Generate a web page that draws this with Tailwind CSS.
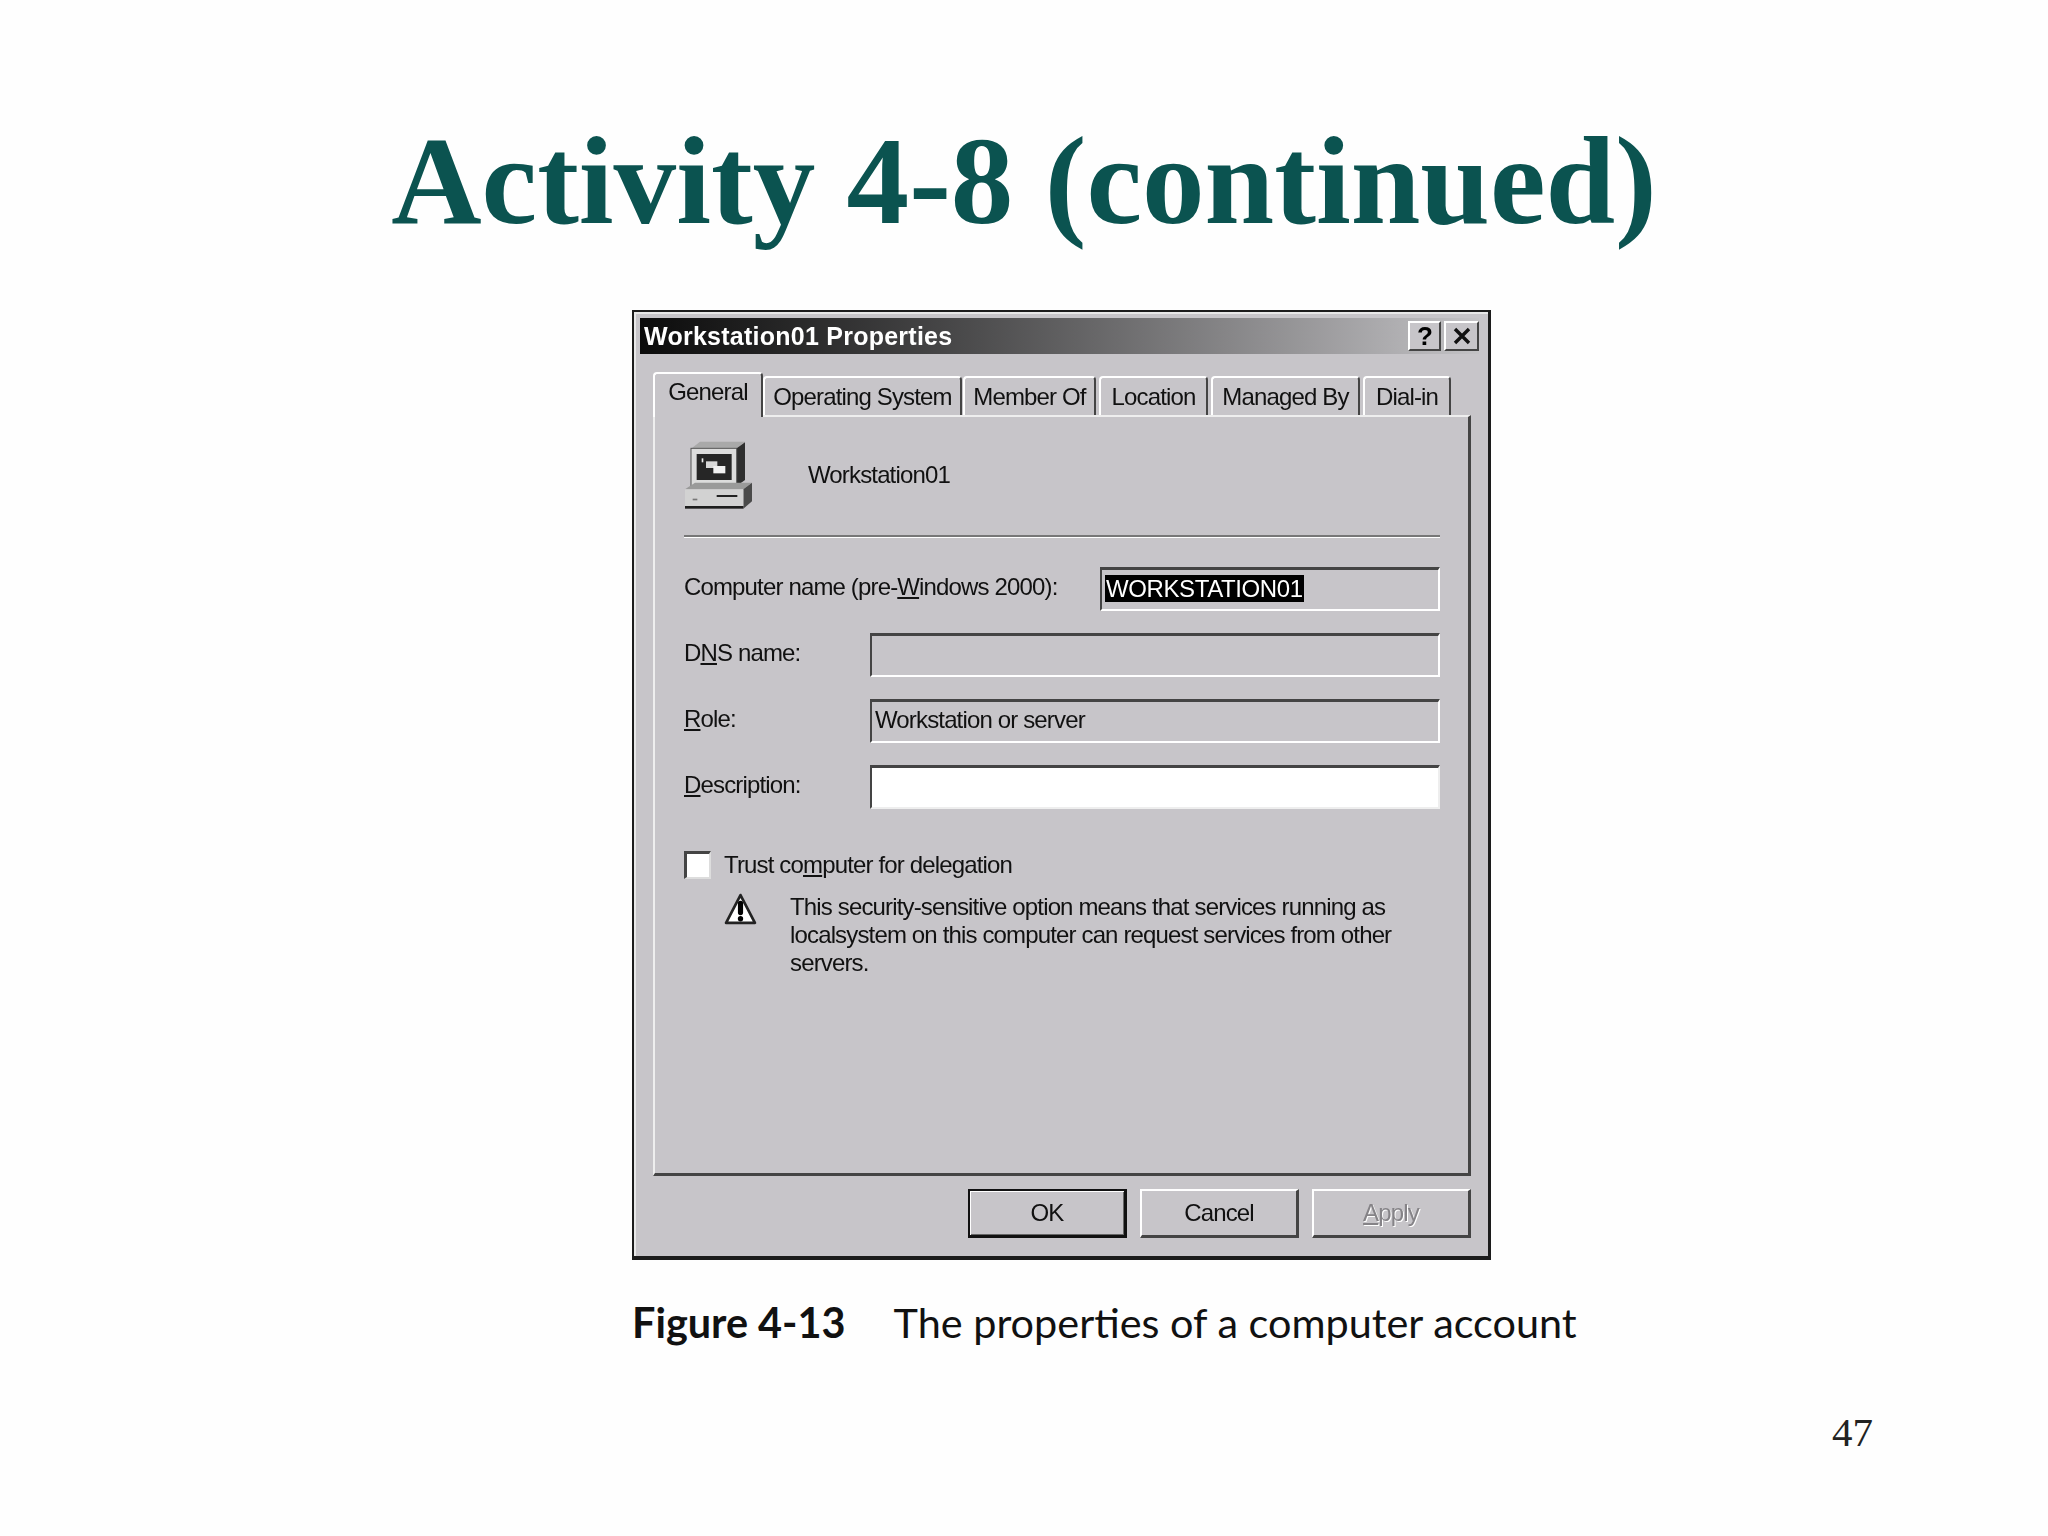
<!DOCTYPE html>
<html lang="en">
<head>
  <meta charset="UTF-8">
  <title>Activity 4-8 (continued)</title>
  <script src="https://cdn.jsdelivr.net/npm/@tailwindcss/browser@4"></script>
</head>
<body class="bg-white">
<div class="w-[2048px] h-[1536px] overflow-hidden bg-[#fefefe] flex flex-col">

  <!-- Slide title -->
  <h1 class="pt-[118px] text-center font-['Liberation_Serif',serif] font-bold text-[125.2px] leading-[125px] text-[#0b5350]">Activity 4-8 (continued)</h1>

  <!-- Properties dialog -->
  <div class="mt-[67px] ml-[632px] w-[859px] h-[950px] flex flex-col bg-[#c7c5c9] border-t-2 border-l-2 border-r-[3px] border-b-[4px] border-[#1c1c1c] pt-[6px] pl-[6px] pr-[9px] font-['Liberation_Sans',sans-serif] text-[24px] leading-[28px] tracking-[-0.85px] text-[#111] blur-[0.7px] shadow-[inset_2px_2px_0_#e8e8e8]">

    <!-- Title bar -->
    <div class="h-[36px] flex items-center justify-between bg-gradient-to-r from-[#0c0c0c] to-[#c4c3c6] pl-[4px] pr-0">
      <span class="font-bold text-white text-[25px] tracking-[0.25px]">Workstation01 Properties</span>
      <div class="flex gap-[3px]">
        <div class="w-[33px] h-[30px] flex items-center justify-center bg-[#c7c5c9] border-t-2 border-l-2 border-white border-r-2 border-b-2 border-r-[#444] border-b-[#444] font-bold text-[26px] text-black">?</div>
        <div class="w-[35px] h-[30px] flex items-center justify-center bg-[#c7c5c9] border-t-2 border-l-2 border-white border-r-2 border-b-2 border-r-[#444] border-b-[#444]">
          <svg width="20" height="18" viewBox="0 0 20 18"><path d="M3 2 L17 16 M17 2 L3 16" stroke="#111" stroke-width="3.4" fill="none"/></svg>
        </div>
      </div>
    </div>

    <!-- Tabs -->
    <div class="mt-[18px] ml-[13px] h-[45px] flex items-end relative z-10">
      <div class="w-[110px] h-[45px] pb-[8px] flex items-center justify-center bg-[#c7c5c9] border-t-2 border-l-2 border-white border-r-2 border-r-[#444] rounded-t-[4px]">General</div>
      <div class="w-[199px] h-[39px] mb-[2px] flex items-center justify-center border-t-2 border-l-2 border-white border-r-2 border-r-[#444] rounded-t-[4px]">Operating System</div>
      <div class="ml-[1px] w-[133px] h-[39px] mb-[2px] flex items-center justify-center border-t-2 border-l-2 border-white border-r-2 border-r-[#444] rounded-t-[4px]">Member Of</div>
      <div class="ml-[3px] w-[109px] h-[39px] mb-[2px] flex items-center justify-center border-t-2 border-l-2 border-white border-r-2 border-r-[#444] rounded-t-[4px]">Location</div>
      <div class="ml-[3px] w-[149px] h-[39px] mb-[2px] flex items-center justify-center border-t-2 border-l-2 border-white border-r-2 border-r-[#444] rounded-t-[4px]">Managed By</div>
      <div class="ml-[3px] w-[88px] h-[39px] mb-[2px] flex items-center justify-center border-t-2 border-l-2 border-white border-r-2 border-r-[#444] rounded-t-[4px]">Dial-in</div>
    </div>

    <!-- Tab panel -->
    <div class="-mt-[2px] ml-[13px] mr-[8px] h-[761px] flex flex-col border-t-2 border-l-2 border-[#eee] border-r-[3px] border-b-[3px] border-r-[#444] border-b-[#444] pl-[29px] pr-[28px] pt-[23px]">

      <div class="flex items-center gap-[52px]">
        <svg class="w-[72px] h-[72px]" viewBox="12 30 216 216">
          <polygon points="35,55 60,35 195,35 170,55" fill="#a9a9a9"/>
          <polygon points="170,55 195,37 195,150 170,168" fill="#2e2e2e"/>
          <rect x="33" y="55" width="137" height="113" fill="#dcdcdc" stroke="#555" stroke-width="3"/>
          <rect x="50" y="72" width="105" height="78" fill="#262626"/>
          <rect x="78" y="94" width="34" height="20" fill="#d8d8d8"/>
          <rect x="100" y="108" width="36" height="22" fill="#f0f0f0"/>
          <rect x="65" y="85" width="5" height="12" fill="#eee"/>
          <polygon points="15,178 45,158 215,158 190,178" fill="#9a9a9a"/>
          <polygon points="190,178 216,158 216,214 190,236" fill="#4a4a4a"/>
          <rect x="15" y="178" width="175" height="50" fill="#d2d2d2"/>
          <rect x="15" y="228" width="175" height="8" fill="#1e1e1e"/>
          <rect x="110" y="195" width="62" height="6" fill="#222"/>
          <rect x="38" y="206" width="14" height="5" fill="#777"/>
        </svg>
        <span class="pb-[3px]">Workstation01</span>
      </div>

      <div class="mt-[23px] h-[3px] bg-[#777] border-b border-white"></div>

      <div class="mt-[29px] flex flex-col gap-[22px]">
        <div class="flex items-center justify-between">
          <span class="pb-[4px]">Computer name (pre-<u>W</u>indows 2000):</span>
          <div class="w-[340px] h-[44px] flex items-center border-t-[3px] border-l-2 border-[#444] border-r-2 border-b-2 border-r-white border-b-white pl-[3px] pb-[3px]">
            <span class="bg-black text-white px-[1px] h-[27px] tracking-[-0.4px]">WORKSTATION01</span>
          </div>
        </div>
        <div class="flex items-center justify-between">
          <span class="pb-[4px]">D<u>N</u>S name:</span>
          <div class="w-[570px] h-[44px] border-t-[3px] border-l-2 border-[#444] border-r-2 border-b-2 border-r-white border-b-white"></div>
        </div>
        <div class="flex items-center justify-between">
          <span class="pb-[4px]"><u>R</u>ole:</span>
          <div class="w-[570px] h-[44px] flex items-center border-t-[3px] border-l-2 border-[#444] border-r-2 border-b-2 border-r-white border-b-white pl-[3px] pb-[4px]">Workstation or server</div>
        </div>
        <div class="flex items-center justify-between">
          <span class="pb-[4px]"><u>D</u>escription:</span>
          <div class="w-[570px] h-[44px] bg-white border-t-[3px] border-l-2 border-[#444] border-r-2 border-b-2 border-r-[#eee] border-b-[#eee]"></div>
        </div>
      </div>

      <div class="mt-[42px] flex items-center gap-[13px]">
        <div class="w-[27px] h-[28px] bg-white border-t-[3px] border-l-[3px] border-[#444] border-r-2 border-b-2 border-r-[#ddd] border-b-[#ddd]"></div>
        <span>Trust co<u>m</u>puter for delegation</span>
      </div>

      <div class="mt-[14px] ml-[40px] flex items-start gap-[33px]">
        <svg class="w-[33px] h-[33px] shrink-0" viewBox="0 0 32 32">
          <polygon points="16,2 30,29 2,29" fill="#fff" stroke="#222" stroke-width="2.6" stroke-linejoin="round"/>
          <path d="M16 10 V19" stroke="#000" stroke-width="5" stroke-linecap="round"/>
          <circle cx="16" cy="25" r="2.6" fill="#000"/>
        </svg>
        <p>This security-sensitive option means that services running as<br>localsystem on this computer can request services from other<br>servers.</p>
      </div>
    </div>

    <!-- Dialog buttons -->
    <div class="mt-[13px] mr-[8px] flex justify-end gap-[13px]">
      <div class="w-[159px] h-[49px] flex items-center justify-center border-2 border-[#111] border-r-[3px] border-b-[3px] shadow-[inset_1px_1px_0_#fff,inset_-1px_-1px_0_#666]">OK</div>
      <div class="w-[159px] h-[49px] flex items-center justify-center border-t-2 border-l-2 border-white border-r-[3px] border-b-[3px] border-r-[#444] border-b-[#444]">Cancel</div>
      <div class="w-[159px] h-[49px] flex items-center justify-center border-t-2 border-l-2 border-white border-r-[3px] border-b-[3px] border-r-[#444] border-b-[#444] text-[#858387] [text-shadow:1px_1px_0_#fff]"><span><u>A</u>pply</span></div>
    </div>
  </div>

  <!-- Figure caption -->
  <p class="mt-[42px] ml-[632px] flex gap-[48px] font-['Lato',sans-serif] text-[41.4px] leading-[40px] text-[#111]">
    <b class="font-bold">Figure 4-13</b>
    <span>The properties of a computer account</span>
  </p>

  <!-- Page number -->
  <p class="mt-[70px] pr-[175px] text-right font-['Liberation_Serif',serif] text-[41px] leading-[41px] text-[#222]">47</p>
</div>
</body>
</html>
